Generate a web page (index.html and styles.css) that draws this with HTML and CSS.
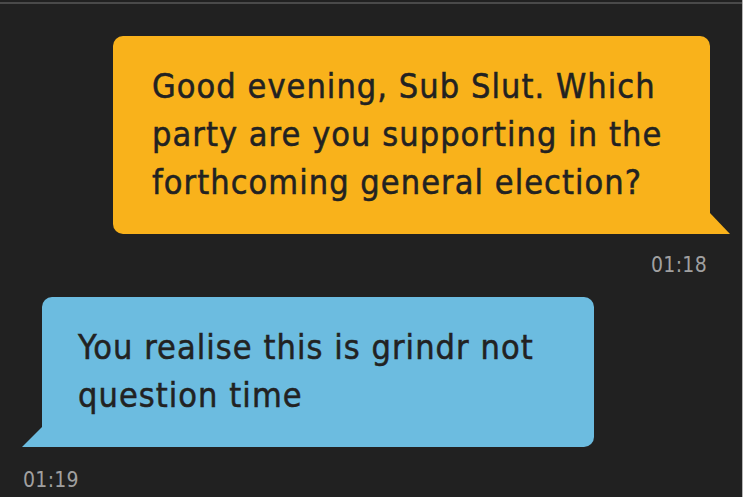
FILE: index.html
```html
<!DOCTYPE html>
<html>
<head>
<meta charset="utf-8">
<link rel="stylesheet" href="styles.css">
</head>
<body>
<div class="screen">
  <div class="topline"></div>
  <div class="chat">
    <div class="msg msg-out">
      <div class="bubble bubble-out">Good evening, Sub Slut. Which party are you supporting in the forthcoming general election?</div>
      <div class="time time-out">01:18</div>
    </div>
    <div class="msg msg-in">
      <div class="bubble bubble-in">You realise this is grindr not question time</div>
      <div class="time time-in">01:19</div>
    </div>
  </div>
</div>
</body>
</html>
```
FILE: styles.css
```css
* { box-sizing: border-box; }
html, body { margin: 0; padding: 0; background: #212121; }
.screen {
  width: 743px;
  height: 497px;
  overflow: hidden;
  background: #212121;
  border-right: 1px solid #b5b5b5;
  font-family: "DejaVu Sans Condensed", "DejaVu Sans", sans-serif;
}
.topline {
  height: 2px;
  margin-top: 2px;
  background: #4a4a4a;
}
.chat { display: flex; flex-direction: column; }
.msg { display: flex; flex-direction: column; }
.bubble {
  position: relative;
  color: #222222;
  font-size: 34px;
  line-height: 48px;
  letter-spacing: 1.05px;
  -webkit-text-stroke: 0.5px #222222;
  border-radius: 10px;
}
.bubble-out {
  margin-top: 32px;
  margin-left: 113px;
  width: 597px;
  padding: 26px 28px 28px 39px;
  background: #f9b21b;
  border-bottom-right-radius: 0;
}
.bubble-out::after {
  content: "";
  position: absolute;
  right: -20px;
  bottom: 0;
  width: 20px;
  height: 21px;
  background: #f9b21b;
  clip-path: polygon(0 0, 100% 100%, 0 100%);
}
.bubble-in {
  margin-top: 20px;
  margin-left: 42px;
  width: 552px;
  padding: 26px 30px 28px 36px;
  background: #6cbce0;
  border-bottom-left-radius: 0;
}
.bubble-in::after {
  content: "";
  position: absolute;
  left: -20px;
  bottom: 0;
  width: 20px;
  height: 20px;
  background: #6cbce0;
  clip-path: polygon(100% 0, 100% 100%, 0 100%);
}
.time {
  color: #a0a0a0;
  font-size: 21px;
  line-height: 24px;
  letter-spacing: 0.3px;
}
.time-out {
  margin-top: 19px;
  align-self: flex-end;
  margin-right: 35px;
}
.time-in {
  margin-top: 21px;
  margin-left: 23px;
}
```
